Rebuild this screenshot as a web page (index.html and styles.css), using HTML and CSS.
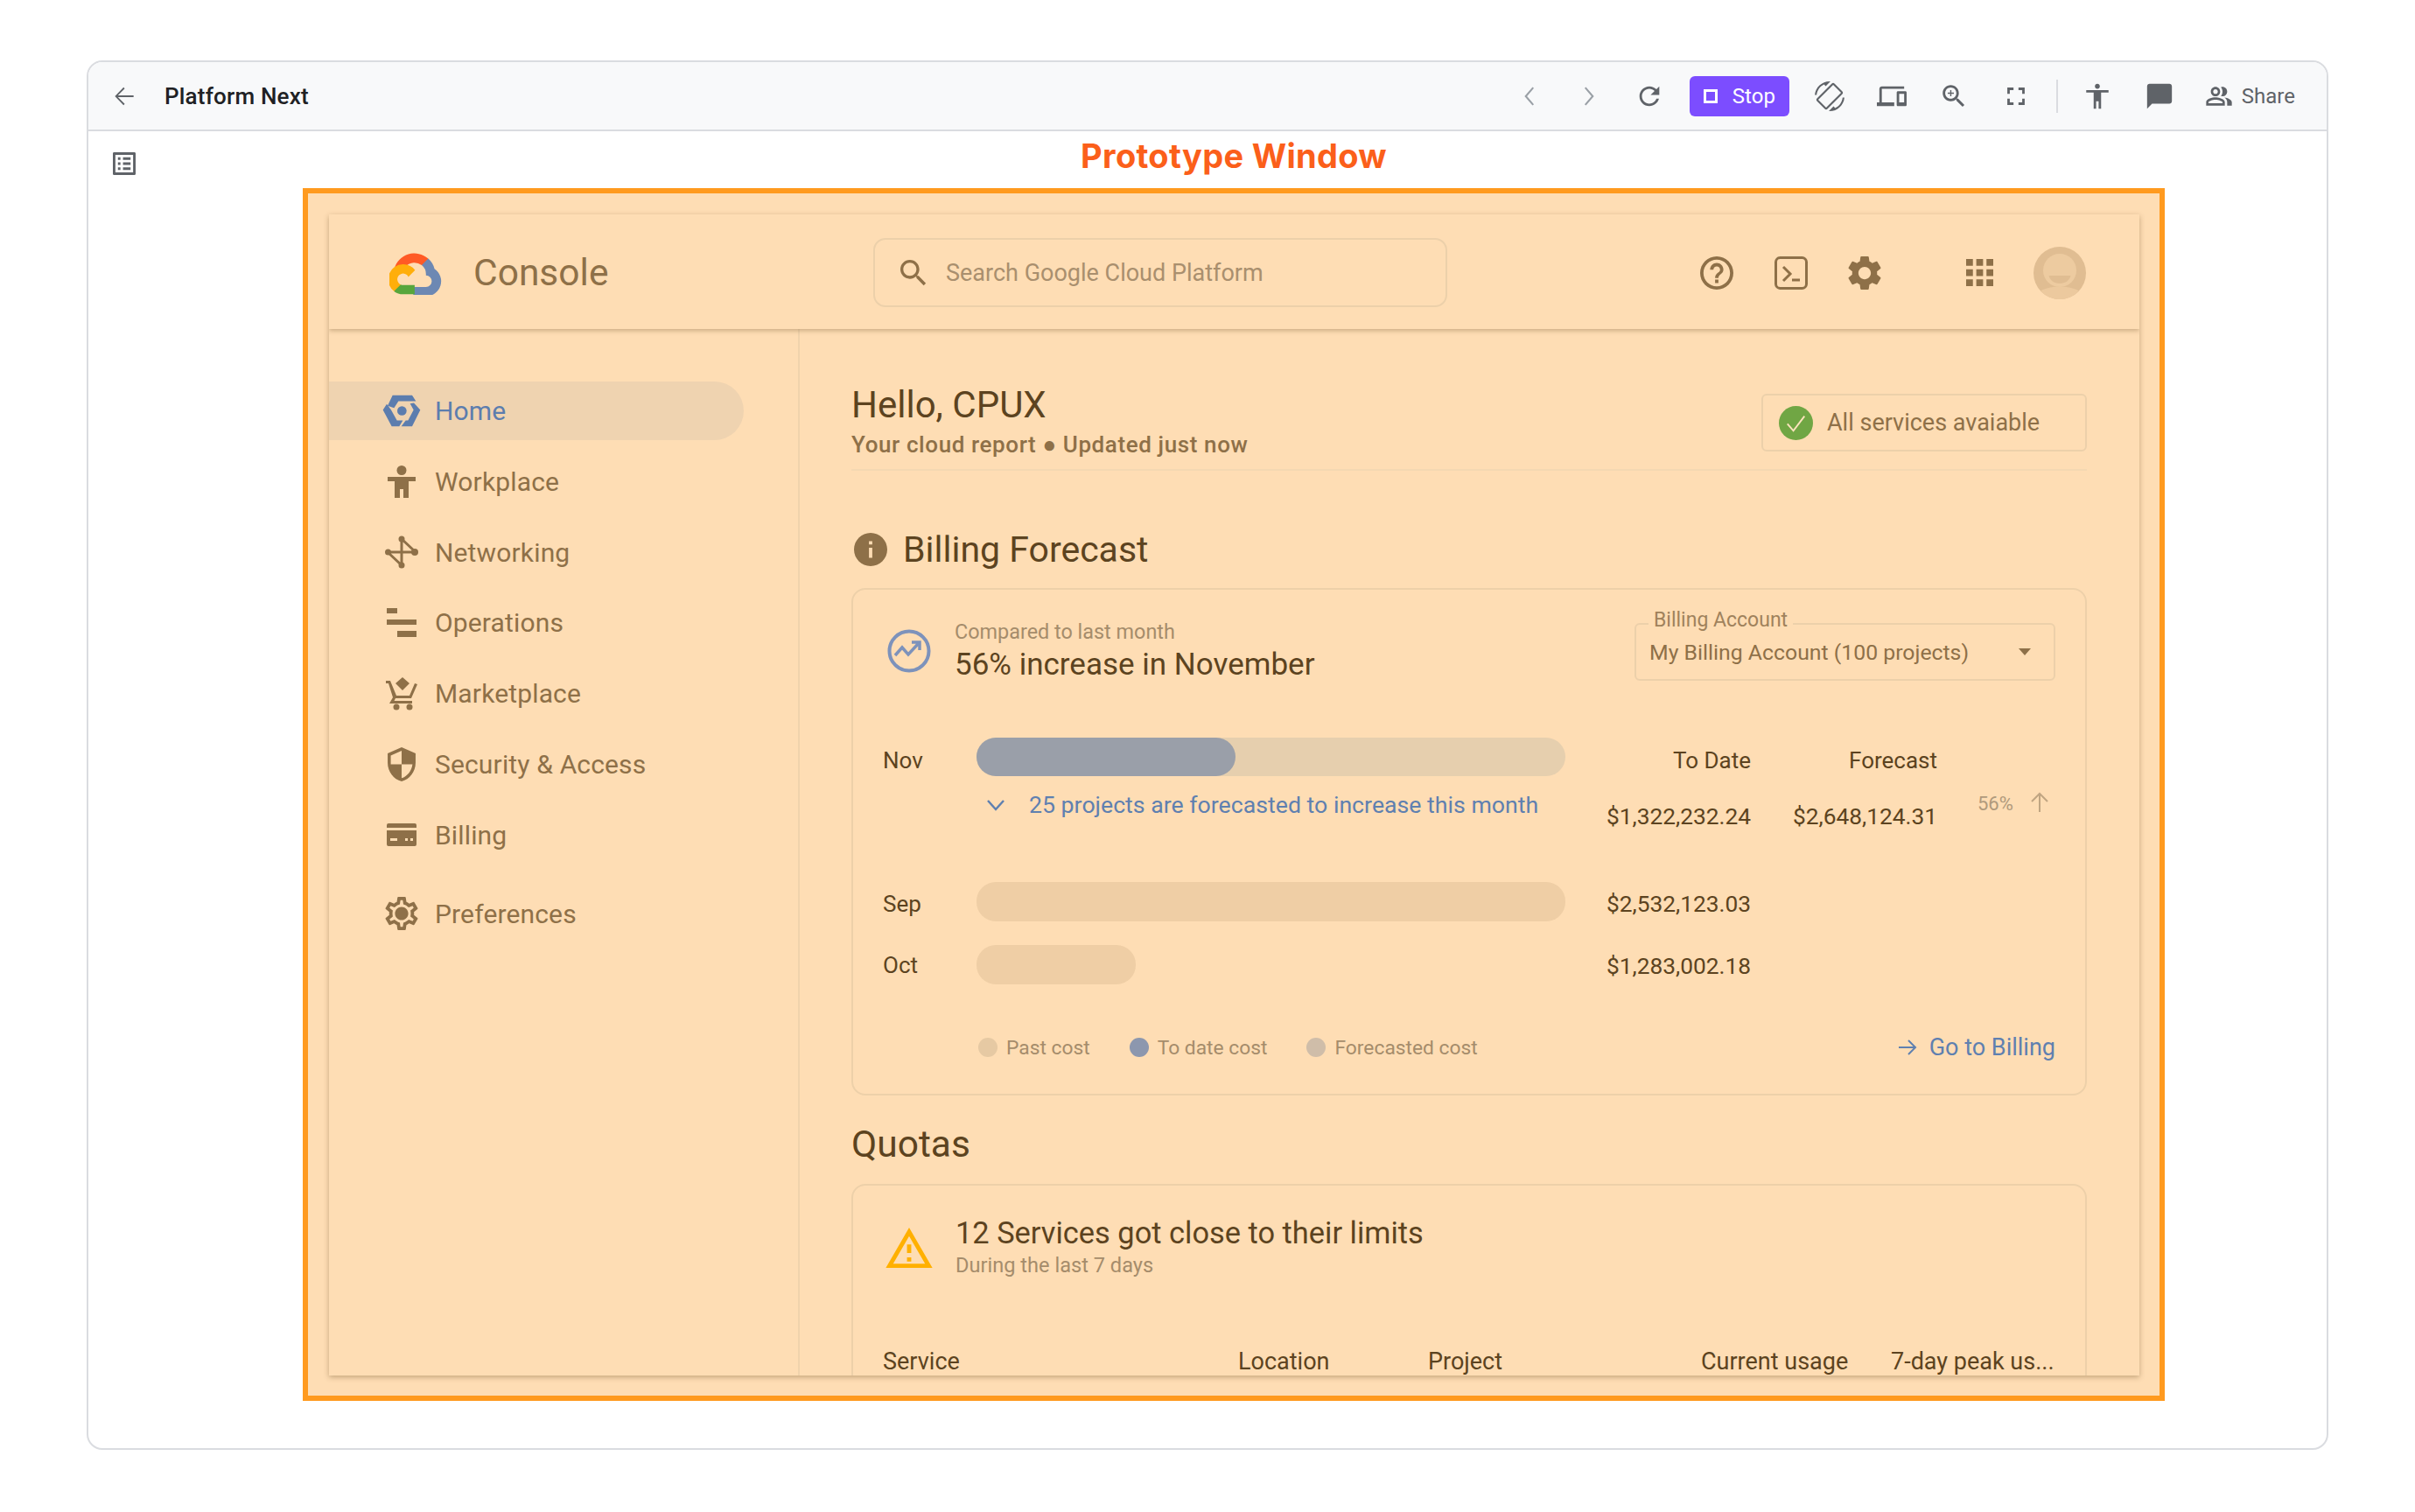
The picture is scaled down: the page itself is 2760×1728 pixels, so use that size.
FILE: index.html
```html
<!DOCTYPE html>
<html lang="en">
<head>
  <meta charset="UTF-8">
  <title>Platform Next</title>
  <link rel="stylesheet" href="styles.css">
</head>
<body>
  <div class="frame">
    <div class="toolbar">
      <svg class="back-icon" viewBox="0 0 24 24"><path d="M20 11.2H6.600l5.800-5.800L11.400 4.400 4 12l7.400 7.600 1-1-5.800-5.800H20z"/></svg>
      <div class="page-name">Platform Next</div>
      <div class="tools">
        <div class="tool tool-faint"><svg viewBox="0 0 24 24"><path class="thin" d="M15 5l-6 7 6 7"/></svg></div>
        <div class="tool tool-faint"><svg viewBox="0 0 24 24"><path class="thin" d="M9 5l6 7-6 7"/></svg></div>
        <div class="tool"><svg viewBox="0 0 24 24"><path d="M17.650 6.350C16.200 4.900 14.210 4 12 4c-4.420 0-7.990 3.580-7.990 8s3.570 8 7.990 8c3.730 0 6.840-2.550 7.730-6h-2.080c-.82 2.330-3.040 4-5.650 4-3.310 0-6-2.690-6-6s2.690-6 6-6c1.660 0 3.140.69 4.220 1.780L13 11h7V4l-2.350 2.350z"/></svg></div>
        <div class="stop-btn"><span class="stop-square"></span>Stop</div>
        <div class="tool"><svg class="flip" viewBox="0 0 24 24"><path d="M16.480 2.520c3.270 1.550 5.610 4.720 5.970 8.480h1.500C23.440 4.840 18.290 0 12 0l-.66.03 3.810 3.810 1.330-1.320zm-6.250-.77c-.59-.59-1.540-.59-2.120 0L1.750 8.110c-.59.59-.59 1.540 0 2.120l12.020 12.020c.59.59 1.540.59 2.120 0l6.360-6.360c.59-.59.59-1.540 0-2.120L10.230 1.750zm4.600 19.440L2.810 9.170l6.360-6.360 12.020 12.020-6.360 6.360zm-7.310.29C4.250 19.940 1.910 16.760 1.550 13H.05C.56 19.160 5.710 24 12 24l.66-.03-3.810-3.810-1.330 1.320z"/></svg></div>
        <div class="tool"><svg viewBox="0 0 24 24"><path d="M4 6h18V4H4c-1.100 0-2 .9-2 2v11H0v3h14v-3H4V6zm19 2h-6c-.55 0-1 .45-1 1v10c0 .55.45 1 1 1h6c.55 0 1-.45 1-1V9c0-.55-.45-1-1-1zm-1 9h-4v-7h4v7z"/></svg></div>
        <div class="tool"><svg viewBox="0 0 24 24"><path d="M15.500 14h-.79l-.28-.27C15.410 12.590 16 11.110 16 9.500 16 5.910 13.090 3 9.500 3S3 5.910 3 9.500 5.910 16 9.500 16c1.610 0 3.090-.59 4.230-1.570l.27.28v.79l5 4.990L20.490 19l-4.990-5zm-6 0C7.010 14 5 11.990 5 9.500S7.010 5 9.500 5 14 7.010 14 9.500 11.990 14 9.500 14z"/><path d="M12 10h-2v2H9v-2H7V9h2V7h1v2h2v1z"/></svg></div>
        <div class="tool"><svg viewBox="0 0 24 24"><path d="M7 14H5v5h5v-2H7v-3zm-2-4h2V7h3V5H5v5zm12 7h-3v2h5v-5h-2v3zM14 5v2h3v3h2V5h-5z"/></svg></div>
        <div class="tool-divider"></div>
        <div class="tool"><svg viewBox="0 0 24 24"><path d="M12 2c1.100 0 2 .9 2 2s-.9 2-2 2-2-.9-2-2 .9-2 2-2zm9 7h-6v13h-2v-6h-2v6H9V9H3V7h18v2z"/></svg></div>
        <div class="tool"><svg viewBox="0 0 24 24"><path d="M20 2H4c-1.100 0-2 .9-2 2v18l4-4h14c1.100 0 2-.9 2-2V4c0-1.100-.9-2-2-2z"/></svg></div>
        <div class="share">
          <svg viewBox="0 0 24 24"><path d="M16.670 13.130C18.040 14.060 19 15.320 19 17v3h4v-3c0-2.180-3.570-3.470-6.330-3.870z"/><path d="M15 12c2.210 0 4-1.790 4-4s-1.790-4-4-4c-.47 0-.91.1-1.330.24C14.500 5.270 15 6.580 15 8s-.5 2.730-1.330 3.760c.42.14.86.24 1.330.24z"/><path d="M9 12c2.210 0 4-1.790 4-4s-1.790-4-4-4-4 1.790-4 4 1.790 4 4 4zm0-6c1.100 0 2 .9 2 2s-.9 2-2 2-2-.9-2-2 .9-2 2-2z"/><path d="M9 13c-2.670 0-8 1.340-8 4v3h16v-3c0-2.660-5.330-4-8-4zm6 5H3v-.99C3.200 16.290 6.300 15 9 15s5.800 1.290 6 2z"/></svg>
          <span>Share</span>
        </div>
      </div>
    </div>

    <div class="stage">
      <svg class="notes-icon" viewBox="3 3 18 18"><path d="M19 5v14H5V5h14m1.100-2H3.900c-.5 0-.9.4-.9.9v16.200c0 .4.4.9.9.9h16.200c.4 0 .9-.5.9-.9V3.900c0-.5-.5-.9-.9-.9zM11 7h6v2h-6V7zm0 4h6v2h-6v-2zm0 4h6v2h-6zM7 7h2v2H7zm0 4h2v2H7zm0 4h2v2H7z"/></svg>
      <div class="proto">
        <div class="proto-title">Prototype Window</div>
        <div class="proto-box">
          <div class="console">
            <div class="topbar">
              <svg class="logo" viewBox="0 0 24 23.200">
                <path fill="#ff5a25" d="M15.190 7.460h.86l2.450-2.450.12-1.040A11.020 11.020 0 0 0 .69 9.340c.27-.11.57-.13.85-.05l4.900-.81s.25-.41.38-.39a6.110 6.110 0 0 1 8.370-.63z"/>
                <path fill="#6d88b3" d="M22 9.340a11.030 11.030 0 0 0-3.320-5.350l-3.440 3.440a6.110 6.110 0 0 1 2.240 4.850v.61a3.060 3.060 0 1 1 0 6.120h-6.120l-.61.62v3.670l.61.61h6.120A7.960 7.960 0 0 0 22 9.340z"/>
                <path fill="#58a63c" d="M5.360 22.890h6.120v-4.900H5.360c-.44 0-.86-.1-1.260-.28l-.86.27-2.470 2.450-.22.86a7.900 7.900 0 0 0 4.810 1.600z"/>
                <path fill="#ffae0a" d="M5.360 7a7.960 7.960 0 0 0-4.810 14.270l3.550-3.550a3.060 3.060 0 1 1 4.050-4.050l3.550-3.550A7.950 7.950 0 0 0 5.360 7z"/>
              </svg>
              <div class="console-name">Console</div>
              <div class="search">
                <svg viewBox="0 0 24 24"><path d="M15.500 14h-.79l-.28-.27C15.410 12.590 16 11.110 16 9.500 16 5.910 13.090 3 9.500 3S3 5.910 3 9.500 5.910 16 9.500 16c1.610 0 3.090-.59 4.230-1.570l.27.28v.79l5 4.990L20.490 19l-4.990-5zm-6 0C7.010 14 5 11.990 5 9.500S7.010 5 9.500 5 14 7.010 14 9.500 11.990 14 9.500 14z"/></svg>
                <span>Search Google Cloud Platform</span>
              </div>
              <div class="top-icons">
                <svg class="top-help" viewBox="2 2 20 20"><path d="M11 18h2v-2h-2v2zm1-16C6.480 2 2 6.480 2 12s4.480 10 10 10 10-4.480 10-10S17.520 2 12 2zm0 18c-4.410 0-8-3.590-8-8s3.590-8 8-8 8 3.590 8 8-3.590 8-8 8zm0-14c-2.210 0-4 1.790-4 4h2c0-1.100.9-2 2-2s2 .9 2 2c0 2-3 1.750-3 5h2c0-2.250 3-2.500 3-5 0-2.210-1.790-4-4-4z"/></svg>
                <svg class="top-term" viewBox="0 0 38 38"><rect class="term-box" x="1.500" y="1.500" width="35" height="35" rx="5"/><path class="term-line" d="M10 12l8 8-8 8M20 27h9"/></svg>
                <svg class="top-gear" viewBox="2.400 2 19.200 20"><path d="M19.140 12.940c.04-.3.06-.61.06-.94 0-.32-.02-.64-.07-.94l2.030-1.580c.18-.14.23-.41.12-.61l-1.920-3.320c-.12-.22-.37-.29-.59-.22l-2.390.96c-.5-.38-1.030-.7-1.620-.94l-.36-2.540c-.04-.24-.24-.41-.48-.41h-3.840c-.24 0-.43.17-.47.41l-.36 2.540c-.59.24-1.130.57-1.620.94l-2.390-.96c-.22-.08-.47 0-.59.22L2.740 8.870c-.12.21-.08.47.12.61l2.030 1.580c-.05.3-.09.63-.09.94s.02.64.07.94l-2.030 1.580c-.18.14-.23.41-.12.61l1.920 3.320c.12.22.37.29.59.22l2.390-.96c.5.38 1.030.7 1.620.94l.36 2.540c.05.24.24.41.48.41h3.840c.24 0 .44-.17.47-.41l.36-2.540c.59-.24 1.130-.56 1.620-.94l2.390.96c.22.08.47 0 .59-.22l1.920-3.320c.12-.22.07-.47-.12-.61l-2.010-1.580zM12 15.600c-1.980 0-3.600-1.620-3.600-3.600s1.620-3.600 3.600-3.600 3.600 1.620 3.600 3.600-1.620 3.600-3.600 3.600z"/></svg>
                <svg class="top-apps" viewBox="4 4 16 16"><path d="M4 8h4V4H4v4zm6 12h4v-4h-4v4zm-6 0h4v-4H4v4zm0-6h4v-4H4v4zm6 0h4v-4h-4v4zm6-10v4h4V4h-4zm-6 4h4V4h-4v4zm6 6h4v-4h-4v4zm0 6h4v-4h-4v4z"/></svg>
                <svg class="avatar" viewBox="0 0 60 60">
                  <circle cx="30" cy="30" r="30" fill="#e0bd92"/>
                  <circle cx="30" cy="27" r="19" fill="#edcba0"/>
                  <path d="M8 50.500C14 47 22 45.500 30 45.500S46 47 52 50.500A30 30 0 0 1 8 50.500z" fill="#ecc99e"/>
                  <path d="M17.500 33h25c-1 5-6 9-12.500 9s-11.500-4-12.500-9z" fill="#e0bd92"/>
                </svg>
              </div>
            </div>

            <div class="console-body">
              <nav class="sidebar">
                <div class="nav-item nav-active">
                  <span class="nav-icon">
                    <svg width="44" height="37" viewBox="20 20 132 110"><path d="M38 58L55 22h67l13 20H75L60 65z"/><path d="M128 48l22 24-28 56H85l15-20h8l19-36-12-22z"/><path d="M22 72l13-20 15 20 20 36h20l-12 20H52z"/><circle cx="87" cy="75" r="16"/></svg>
                  </span>
                  Home
                </div>
                <div class="nav-item">
                  <span class="nav-icon">
                    <svg width="32" height="37" viewBox="0 0 32 37"><circle cx="16" cy="5.500" r="5.500"/><path d="M0 13h32v5H24v19h-6V27h-4v10H8V18H0z"/></svg>
                  </span>
                  Workplace
                </div>
                <div class="nav-item">
                  <span class="nav-icon">
                    <svg width="38" height="38" viewBox="0 0 38 38"><path class="net" d="M3 19h33M19 6v26M19 4l16 15M19 34L3 19"/><circle cx="3.500" cy="19" r="3.500"/><circle cx="34" cy="19" r="4"/><circle cx="19" cy="4" r="3.500"/><circle cx="19" cy="34" r="3.500"/></svg>
                  </span>
                  Networking
                </div>
                <div class="nav-item">
                  <span class="nav-icon">
                    <svg width="34" height="33" viewBox="0 0 34 33"><path d="M0 0h12v6H0zM0 13h34v6H0zM12 26h22v7H12z"/></svg>
                  </span>
                  Operations
                </div>
                <div class="nav-item">
                  <span class="nav-icon">
                    <svg width="36" height="38" viewBox="0 0 36 38"><path d="M19 0l8 7-8 8-8-8zM0 4h5l7 17h15l6-14 3 1-7 16H11l-1.500 3H30v3H4l4-7L3 7H0z"/><circle cx="12" cy="34" r="3.500"/><circle cx="27" cy="34" r="3.500"/></svg>
                  </span>
                  Marketplace
                </div>
                <div class="nav-item">
                  <span class="nav-icon">
                    <svg width="34" height="39" viewBox="3 1 18 22"><path d="M12 1L3 5v6c0 5.550 3.840 10.740 9 12 5.160-1.260 9-6.450 9-12V5l-9-4zm0 10.990h7c-.53 4.120-3.280 7.790-7 8.940V12H5V6.300l7-3.110v8.800z"/></svg>
                  </span>
                  Security &amp; Access
                </div>
                <div class="nav-item">
                  <span class="nav-icon">
                    <svg width="34" height="26" viewBox="0 0 34 26"><path fill-rule="evenodd" d="M2 0h30a2 2 0 0 1 2 2v22a2 2 0 0 1-2 2H2a2 2 0 0 1-2-2V2a2 2 0 0 1 2-2zM0 5v3h34V5zM4 17v3h8v-3zM21 17v3h3v-3zM27 17v3h3v-3z"/></svg>
                  </span>
                  Billing
                </div>
                <div class="nav-item nav-last">
                  <span class="nav-icon">
                    <svg width="38" height="38" viewBox="2 2 20 20"><path d="M19.430 12.980c.04-.32.07-.64.07-.98 0-.34-.03-.66-.07-.98l2.110-1.650c.19-.15.24-.42.12-.64l-2-3.460c-.09-.16-.26-.25-.44-.25-.06 0-.12.01-.17.03l-2.490 1c-.52-.4-1.080-.73-1.690-.98l-.38-2.650C14.460 2.180 14.250 2 14 2h-4c-.25 0-.46.18-.49.42l-.38 2.650c-.61.25-1.170.59-1.690.98l-2.490-1c-.06-.02-.12-.03-.18-.03-.17 0-.34.09-.43.25l-2 3.460c-.13.22-.07.49.12.64l2.110 1.650c-.04.32-.07.65-.07.98 0 .33.03.66.07.98l-2.110 1.650c-.19.15-.24.42-.12.64l2 3.460c.09.16.26.25.44.25.06 0 .12-.01.17-.03l2.490-1c.52.4 1.080.73 1.690.98l.38 2.650c.03.24.24.42.49.42h4c.25 0 .46-.18.49-.42l.38-2.650c.61-.25 1.170-.59 1.690-.98l2.490 1c.06.02.12.03.18.03.17 0 .34-.09.43-.25l2-3.460c.12-.22.07-.49-.12-.64l-2.110-1.650zm-1.980-1.710c.04.31.05.52.05.73 0 .21-.02.43-.05.73l-.14 1.130.89.7 1.080.84-.7 1.210-1.270-.51-1.040-.42-.9.68c-.43.32-.84.56-1.250.73l-1.060.43-.16 1.130-.2 1.350h-1.400l-.19-1.350-.16-1.130-1.060-.43c-.43-.18-.83-.41-1.230-.71l-.91-.7-1.060.43-1.270.51-.7-1.210 1.080-.84.89-.7-.14-1.130c-.03-.31-.05-.54-.05-.74s.02-.43.05-.73l.14-1.130-.89-.7-1.080-.84.7-1.210 1.270.51 1.040.42.9-.68c.43-.32.84-.56 1.250-.73l1.060-.43.16-1.130.2-1.350h1.390l.19 1.350.16 1.130 1.060.43c.43.18.83.41 1.230.71l.91.7 1.060-.43 1.270-.51.7 1.210-1.070.85-.89.7.14 1.130zM12 8c-2.210 0-4 1.790-4 4s1.790 4 4 4 4-1.790 4-4-1.790-4-4-4z"/></svg>
                  </span>
                  Preferences
                </div>
              </nav>

              <main class="content">
                <div class="greeting">
                  <div>
                    <div class="hello">Hello, CPUX</div>
                    <div class="report">Your cloud report ● Updated just now</div>
                  </div>
                  <div class="status">
                    <svg viewBox="0 0 40 40"><circle cx="20" cy="20" r="20" fill="#70a644"/><path d="M10 21l7 8 13-17" fill="none" stroke="#fde3bd" stroke-width="2"/></svg>
                    <span>All services avaiable</span>
                  </div>
                </div>

                <h2 class="section-title">
                  <svg viewBox="2 2 20 20"><path d="M12 2C6.480 2 2 6.480 2 12s4.480 10 10 10 10-4.480 10-10S17.520 2 12 2zm1 15h-2v-6h2v6zm0-8h-2V7h2v2z"/></svg>
                  Billing Forecast
                </h2>
                <section class="card billing">
                  <div class="card-head">
                    <svg class="trend" viewBox="0 0 50 50"><circle cx="25" cy="25" r="22.500" fill="none" stroke="#7d92bb" stroke-width="4"/><path d="M9 30l8-9 7 8 12-13M28 15h9v9" fill="none" stroke="#7d92bb" stroke-width="3.500"/></svg>
                    <div class="head-text">
                      <div class="compared">Compared to last month</div>
                      <div class="increase">56% increase in November</div>
                    </div>
                    <div class="select">
                      <span class="select-label">Billing Account</span>
                      <span class="select-value">My Billing Account (100 projects)</span>
                      <span class="caret"></span>
                    </div>
                  </div>

                  <div class="chart">
                    <div class="month month-nov">Nov</div>
                    <div class="bar bar-track"><div class="bar-fill" style="width:44%"></div></div>
                    <div class="col-head">To Date</div>
                    <div class="col-head">Forecast</div>
                    <div></div>

                    <div></div>
                    <div class="projects">
                      <svg viewBox="0 0 22 14"><path d="M2 2l9 10 9-10" fill="none" stroke="#5f80b0" stroke-width="2.500"/></svg>
                      25 projects are forecasted to increase this month
                    </div>
                    <div class="amount amount-nov">$1,322,232.24</div>
                    <div class="amount amount-nov">$2,648,124.31</div>
                    <div class="delta">
                      <span>56%</span>
                      <svg viewBox="0 0 22 24"><path d="M11 23V2M2 11l9-9 9 9" fill="none" stroke="#c0a582" stroke-width="2"/></svg>
                    </div>

                    <div class="month month-sep">Sep</div>
                    <div><div class="bar bar-past"></div></div>
                    <div class="amount amount-sep">$2,532,123.03</div>
                    <div></div>
                    <div></div>

                    <div class="month month-oct">Oct</div>
                    <div><div class="bar bar-past" style="width:27%"></div></div>
                    <div class="amount amount-oct">$1,283,002.18</div>
                    <div></div>
                    <div></div>
                  </div>

                  <div class="chart-foot">
                    <div class="legend">
                      <span class="dot dot-past"></span><span class="legend-label">Past cost</span>
                      <span class="dot dot-date"></span><span class="legend-label">To date cost</span>
                      <span class="dot dot-fore"></span><span class="legend-label">Forecasted cost</span>
                    </div>
                    <div class="go-billing">
                      <svg viewBox="0 0 21 20"><path d="M0 10h19M11 2l8 8-8 8" fill="none" stroke="#5f80b0" stroke-width="2"/></svg>
                      Go to Billing
                    </div>
                  </div>
                </section>

                <h2 class="section-title quotas-title">Quotas</h2>
                <section class="card quotas">
                  <div class="quota-head">
                    <svg class="warn" viewBox="1 2 22 19"><path d="M12 5.990L19.530 19H4.470L12 5.990M12 2L1 21h22L12 2zm1 14h-2v2h2v-2zm0-6h-2v4h2v-4z"/></svg>
                    <div>
                      <div class="quota-title">12 Services got close to their limits</div>
                      <div class="quota-sub">During the last 7 days</div>
                    </div>
                  </div>
                  <div class="quota-table">
                    <div>Service</div>
                    <div>Location</div>
                    <div>Project</div>
                    <div>Current usage</div>
                    <div>7-day peak us...</div>
                  </div>
                </section>
              </main>
            </div>
          </div>
        </div>
      </div>
    </div>
  </div>
</body>
</html>
```

FILE: styles.css
```css
* { box-sizing: border-box; }
body {
  margin: 0;
  background: #fff;
  font-family: Roboto, Arial, sans-serif;
  color: #5c4320;
}
svg { display: block; flex: none; }

.frame {
  margin: 69px 99px 0 99px;
  width: 2562px;
  height: 1588px;
  border: 2px solid #dadce0;
  border-radius: 18px;
  overflow: hidden;
}

/* top toolbar */
.toolbar {
  height: 79px;
  background: #f8f9fa;
  border-bottom: 2px solid #dadce0;
  display: flex;
  align-items: center;
  padding: 0 36px 0 25px;
  fill: #5f6368;
}
.back-icon { width: 32px; height: 32px; }
.page-name {
  margin-left: 30px;
  font-size: 26px;
  font-weight: 500;
  letter-spacing: .2px;
  color: #202124;
}
.tools {
  margin-left: auto;
  display: flex;
  align-items: center;
}
.tool {
  width: 71px;
  display: flex;
  justify-content: center;
}
.tool svg { width: 34px; height: 34px; }
.tool svg.flip { transform: scaleX(-1); }
.tool-faint { width: 68px; }
.thin { fill: none; stroke: #9aa0a6; stroke-width: 1.5; }
.stop-btn {
  margin: 0 11px 0 10px;
  width: 114px;
  height: 46px;
  background: #7c4dff;
  border-radius: 6px;
  color: #fff;
  font-size: 24px;
  display: flex;
  align-items: center;
  padding-left: 16px;
}
.stop-square {
  width: 16px;
  height: 16px;
  border: 3px solid #fff;
  margin-right: 17px;
}
.tool-divider {
  width: 2px;
  height: 38px;
  background: #dadce0;
  margin: 0 10px;
}
.share {
  display: flex;
  align-items: center;
  margin-left: 16px;
  font-size: 24px;
  color: #5f6368;
}
.share svg { width: 32px; height: 32px; margin-right: 10px; }

/* white area with the orange box */
.stage {
  position: relative;
  padding-left: 245px;
}
.notes-icon {
  position: absolute;
  left: 28px;
  top: 24px;
  width: 26px;
  height: 26px;
  fill: #5f6368;
}
.proto { width: 2128px; }
.proto-title {
  height: 65px;
  line-height: 56px;
  text-align: center;
  font-family: Inter, Roboto, sans-serif;
  font-size: 38px;
  font-weight: 700;
  letter-spacing: .3px;
  color: #fb5f1a;
}
.proto-box {
  height: 1386px;
  background: #feddb4;
  border: 6px solid #ff9a1f;
  padding: 24px 23px 23px 24px;
}

/* console card */
.console {
  height: 1327px;
  background: #feddb4;
  box-shadow: 0 2px 6px rgba(90, 60, 20, .35);
  overflow: hidden;
  display: flex;
  flex-direction: column;
}
.topbar {
  height: 131px;
  flex: none;
  display: flex;
  align-items: center;
  padding: 2px 0 0 69px;
  box-shadow: 0 2px 5px rgba(90, 60, 20, .3);
  position: relative;
  fill: #8e7048;
}
.logo { width: 60px; height: 50px; }
.console-name {
  margin-left: 36px;
  width: 457px;
  font-size: 42.5px;
  color: #8e7048;
}
.search {
  width: 656px;
  height: 79px;
  border: 2px solid #ecd0aa;
  border-radius: 14px;
  display: flex;
  align-items: center;
  padding-left: 24px;
  font-size: 27px;
  color: #a98f6e;
}
.search svg { width: 40px; height: 40px; margin-right: 17px; fill: #8e7048; }
.top-icons {
  margin-left: 289px;
  display: flex;
  align-items: center;
}
.top-help { width: 38px; height: 38px; }
.top-term { width: 38px; height: 38px; margin-left: 47px; }
.term-box { fill: none; stroke: #8e7048; stroke-width: 3; }
.term-line { fill: none; stroke: #8e7048; stroke-width: 3; }
.top-gear { width: 38px; height: 40px; margin-left: 46px; }
.top-apps { width: 31px; height: 31px; margin-left: 97px; }
.avatar { width: 60px; height: 60px; margin-left: 46px; }

.console-body { flex: 1; display: flex; min-height: 0; }
.sidebar {
  width: 538px;
  flex: none;
  border-right: 2px solid #f0d3ac;
  padding-top: 60px;
  padding-right: 62px;
  fill: #8e7048;
}
.nav-item {
  height: 67px;
  margin-bottom: 13.8px;
  display: flex;
  align-items: center;
  font-size: 30px;
  letter-spacing: .15px;
  color: #8e7048;
  border-radius: 0 34px 34px 0;
}
.nav-icon {
  width: 121px;
  padding-left: 62px;
  display: flex;
  justify-content: center;
  padding-right: 18px;
}
.nav-active {
  background: #efd3b0;
  color: #5c7dae;
  fill: #5c7dae;
}
.net { fill: none; stroke: #8e7048; stroke-width: 3; }
.nav-last { margin-top: 23px; }

.content {
  flex: 1;
  min-width: 0;
  padding: 63px 60px 0 59px;
}
.greeting {
  display: flex;
  justify-content: space-between;
  align-items: flex-start;
  border-bottom: 2px solid #f4d8b2;
  height: 99px;
}
.hello { font-size: 42px; line-height: 48px; }
.report {
  margin-top: 3px;
  font-size: 26px;
  line-height: 36px;
  font-weight: 500;
  letter-spacing: .6px;
  color: #8e7048;
}
.status {
  margin-top: 11px;
  width: 372px;
  height: 66px;
  border: 2px solid #ecd0aa;
  border-radius: 6px;
  display: flex;
  align-items: center;
  padding-left: 18px;
  font-size: 27px;
  color: #8e7048;
}
.status svg { width: 39px; height: 39px; margin-right: 16px; }

.section-title {
  margin: 66px 0 20px 0;
  height: 48px;
  line-height: 48px;
  font-size: 41px;
  font-weight: 400;
  display: flex;
  align-items: center;
}
.section-title svg { width: 38px; height: 38px; margin: 0 18px 0 3px; fill: #8e7048; }
.quotas-title { margin: 32px 0 21px 0; font-size: 42.5px; }

.card {
  border: 2px solid #edd0a9;
  border-radius: 16px;
  padding: 30px 34px 34px 34px;
}
.billing { height: 580px; }
.card-head { display: flex; height: 84px; }
.trend { width: 50px; height: 50px; margin: 15px 0 0 5px; }
.head-text { margin-left: 27px; padding-top: 2px; flex: 1; }
.compared { font-size: 23.4px; line-height: 32px; color: #a58c6b; }
.increase { font-size: 35px; line-height: 44px; }

.select {
  position: relative;
  margin-top: 8px;
  width: 481px;
  height: 66px;
  border: 2px solid #ecd0aa;
  border-radius: 6px;
  display: flex;
  align-items: center;
  padding-left: 15px;
  font-size: 24.8px;
  color: #8e7048;
}
.select-label {
  position: absolute;
  left: 14px;
  top: -20px;
  padding: 0 6px;
  background: #feddb4;
  font-size: 23px;
  line-height: 30px;
  color: #a0825c;
}
.caret {
  position: absolute;
  right: 26px;
  top: 27px;
  border-top: 8px solid #8e7048;
  border-left: 7px solid transparent;
  border-right: 7px solid transparent;
}

.chart {
  margin-top: 55px;
  display: grid;
  grid-template-columns: 107px 673px 212px 213px 135px;
  grid-template-rows: 44px 121px 72px 44px;
}
.month { font-size: 26px; }
.month-nov { line-height: 52px; }
.month-sep { line-height: 50px; }
.month-oct { line-height: 46px; }
.bar { height: 44px; border-radius: 22px; }
.bar-track { background: #e6cfae; }
.bar-fill { height: 100%; background: #9a9fa9; border-radius: 22px; }
.bar-past { background: #efcea5; height: 45px; }
.col-head {
  font-size: 26px;
  line-height: 52px;
  text-align: right;
}
.projects {
  padding-top: 15px;
  line-height: 36px;
  font-size: 26.7px;
  white-space: nowrap;
  color: #5f80b0;
  display: flex;
  align-items: flex-start;
  height: 51px;
}
.projects svg { width: 22px; height: 14px; margin: 11px 27px 0 11px; }
.amount { font-size: 26.3px; text-align: right; }
.amount-nov { padding-top: 30px; line-height: 32px; }
.amount-sep { line-height: 50px; }
.amount-oct { line-height: 48px; }
.delta {
  padding: 18px 0 0 46px;
  display: flex;
  align-items: flex-start;
  font-size: 22px;
  line-height: 28px;
  color: #b09a7c;
}
.delta svg { width: 22px; height: 24px; margin-left: 19px; }

.chart-foot {
  margin-top: 55px;
  height: 36px;
  margin-left: 109px;
  display: flex;
  justify-content: space-between;
  align-items: center;
}
.legend { display: flex; align-items: center; font-size: 22.8px; color: #a58c6b; }
.dot { width: 22px; height: 22px; border-radius: 50%; }
.dot-past { background: #e6c9a3; }
.dot-date { background: #8c97ae; }
.dot-fore { background: #cfbda9; }
.legend-label { margin: 0 45px 0 10px; }
.go-billing {
  display: flex;
  align-items: center;
  font-size: 27px;
  color: #5f80b0;
}
.go-billing svg { width: 21px; height: 20px; margin-right: 14px; }

.quotas { padding-top: 32px; padding-bottom: 0; height: 400px; }
.quota-head { display: flex; }
.warn { width: 54px; height: 46px; margin: 16px 0 0 3px; fill: #ffb000; }
.quota-head > div { margin-left: 26px; }
.quota-title { font-size: 34.4px; line-height: 44px; }
.quota-sub { font-size: 23.6px; line-height: 30px; color: #a58c6b; }
.quota-table {
  margin-top: 80px;
  display: grid;
  grid-template-columns: 406px 217px 312px 217px 187px;
  font-size: 27px;
  line-height: 30px;
  white-space: nowrap;
}
```
